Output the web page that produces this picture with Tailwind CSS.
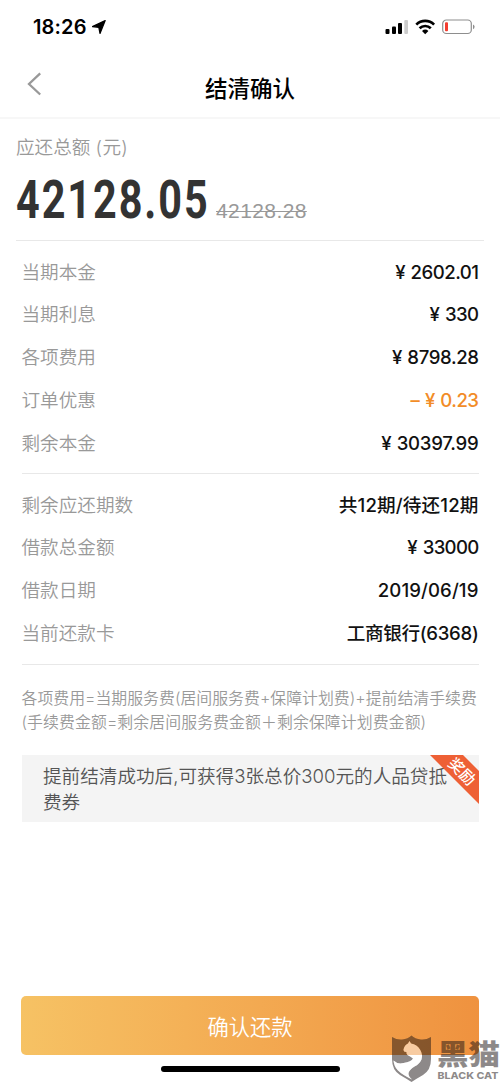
<!DOCTYPE html>
<html lang="zh-CN">
<head>
<meta charset="utf-8">
<title>结清确认</title>
<script src="https://cdn.jsdelivr.net/npm/@tailwindcss/browser@4"></script>
</head>
<body class="bg-white">
<div class="relative flex h-[1082px] w-[500px] flex-col overflow-hidden bg-white font-['Inter','Noto_Sans_CJK_SC',sans-serif] whitespace-nowrap">
  <!-- status bar -->
  <div class="flex h-[54px] shrink-0 items-center justify-between pl-[33px] pr-[25px]">
    <div class="flex items-center gap-[5px]">
      <span class="text-[20px] leading-[54px] font-semibold tracking-[0.15px]">18:26</span>
      <svg class="h-[14px] w-[14px]" viewBox="0 0 14 14"><path d="M13.2.6 8 13.4 6.8 7.3.4 6.6Z" fill="#000" stroke="#000" stroke-width="1.2" stroke-linejoin="round"/></svg>
    </div>
    <svg class="h-[16px] w-[90px]" viewBox="0 0 90 16">
      <rect x="0.5" y="10" width="4" height="5" rx="1"/><rect x="7" y="7.5" width="4" height="7.5" rx="1"/><rect x="13" y="4" width="4" height="11" rx="1"/><rect x="19.3" y="1" width="3.7" height="14" rx="1" fill="#ccc"/>
      <g fill="none" stroke="#000" stroke-width="2.7"><path d="M31.3 5.6a12.6 12.6 0 0 1 17.8 0"/><path d="M34.6 9.3a8 8 0 0 1 11.2 0"/></g>
      <path d="M37 11.9a4.7 4.7 0 0 1 6.4 0L40.2 15.2Z"/>
      <rect x="57.7" y="1" width="28.6" height="13.5" rx="3.6" fill="none" stroke="#8e8e8e" stroke-width="1.2"/><rect x="60" y="3.3" width="3" height="9" rx="1" fill="#f43d30"/><path d="M88 5.4v4.8q1.6-.7 1.6-2.4T88 5.4Z" fill="#8e8e8e"/>
    </svg>
  </div>
  <!-- title bar -->
  <div class="grid h-[65px] shrink-0 grid-cols-[1fr_auto_1fr] items-center border-b-2 border-[#f7f7f7] pl-[27px] pr-[27px]">
    <svg class="mb-[4px] h-[24px] w-[15px]" viewBox="0 0 15 24"><path d="M13.2 1.3 2 12l11.2 10.5" fill="none" stroke="#999" stroke-width="2.3"/></svg>
    <h1 class="pt-[6px] text-[22.5px] leading-[30px] font-medium text-black">结清确认</h1>
    <span></span>
  </div>
  <!-- total -->
  <div class="mx-4 flex h-[122px] shrink-0 flex-col border-b border-[#e8e8e8] pt-[14px]">
    <div class="text-[18.6px] leading-[28px] font-[350] text-[#999]">应还总额 <span class="tracking-[0.3px]">(元)</span></div>
    <div class="flex items-baseline">
      <div class="w-[200px]"><div class="w-max origin-left scale-x-[0.78] font-['Roboto'] text-[53px] leading-[79px] font-bold tracking-[2.5px] text-[#333]">42128.05</div></div>
      <div class="font-['Liberation_Sans'] text-[21px] tracking-[0.4px] text-[#999] line-through decoration-1">42128.28</div>
    </div>
  </div>
  <!-- breakdown -->
  <div class="mx-[21.5px] flex h-[233px] shrink-0 flex-col border-b border-[#e8e8e8] pt-[9.7px] text-[18.6px] leading-[42.7px]">
    <div class="flex justify-between"><span class="font-[350] text-[#999]">当期本金</span><span class="flex font-medium text-[#111]"><span class="mr-[5px]">¥</span><span class="tracking-[-0.5px]">2602.01</span></span></div>
    <div class="flex justify-between"><span class="font-[350] text-[#999]">当期利息</span><span class="flex font-medium text-[#111]"><span class="mr-[5px]">¥</span><span class="tracking-[-0.6px]">330</span></span></div>
    <div class="flex justify-between"><span class="font-[350] text-[#999]">各项费用</span><span class="flex font-medium text-[#111]"><span class="mr-[5px]">¥</span><span class="tracking-[-0.4px]">8798.28</span></span></div>
    <div class="flex justify-between"><span class="font-[350] text-[#999]">订单优惠</span><span class="flex font-medium text-[#f28c28]"><span class="mr-[5px]">–</span><span class="mr-[5px]">¥</span><span class="tracking-[-0.5px]">0.23</span></span></div>
    <div class="flex justify-between"><span class="font-[350] text-[#999]">剩余本金</span><span class="flex font-medium text-[#111]"><span class="mr-[5px]">¥</span><span class="tracking-[-0.25px]">30397.99</span></span></div>
  </div>
  <!-- loan details -->
  <div class="mx-[21.5px] flex h-[191px] shrink-0 flex-col border-b border-[#e8e8e8] pt-[9.7px] text-[18.6px] leading-[42.7px]">
    <div class="flex justify-between"><span class="font-[350] text-[#999]">剩余应还期数</span><span class="font-medium tracking-[0.15px] text-[#111]">共12期/待还12期</span></div>
    <div class="flex justify-between"><span class="font-[350] text-[#999]">借款总金额</span><span class="flex font-medium text-[#111]"><span class="mr-[5px]">¥</span><span class="tracking-[-0.7px]">33000</span></span></div>
    <div class="flex justify-between"><span class="font-[350] text-[#999]">借款日期</span><span class="font-medium tracking-[0.1px] text-[#111]">2019/06/19</span></div>
    <div class="flex justify-between"><span class="font-[350] text-[#999]">当前还款卡</span><span class="font-medium tracking-[-0.3px] text-[#111]">工商银行(6368)</span></div>
  </div>
  <!-- fee note -->
  <div class="mx-[21.5px] h-[90px] shrink-0 pt-[22px] text-[15.9px] leading-[24px] font-[350] text-[#999]">
    <div>各项费用=当期服务费(居间服务费+保障计划费)+提前结清手续费</div>
    <div class="tracking-[0.07px]">(手续费金额=剩余居间服务费金额＋剩余保障计划费金额)</div>
  </div>
  <!-- reward -->
  <div class="relative mx-[22px] h-[67px] w-[457px] shrink-0 bg-[#f4f4f4] pt-[8px] pl-[21px] text-[18.6px] leading-[27px] font-[350] text-[#555]">
    <div>提前结清成功后,可获得3张总价300元的人品贷抵</div>
    <div class="-mt-px">费券</div>
    <svg class="absolute top-0 right-0 h-[49px] w-[49px]" viewBox="0 0 49 49"><path d="M0 0H33L49 16V49Z" fill="#ee6035"/><text x="31.5" y="22" transform="rotate(45 31.5 17)" text-anchor="middle" font-size="15.500" font-weight="500" font-family="Noto Sans CJK SC" fill="#fff">奖励</text></svg>
  </div>
  <div class="flex-1"></div>
  <button class="mx-auto mb-[11px] h-[59px] w-[458px] shrink-0 rounded-[5px] bg-linear-to-r from-[#f6c264] to-[#ef923f] pt-[4px] text-[21.3px] font-[350] text-white">确认还款</button>
  <div class="mx-auto mb-[10px] h-[6px] w-[179px] shrink-0 rounded-full bg-black"></div>
  <!-- watermark -->
  <svg class="absolute right-0 bottom-0 h-[52px] w-[112px]" viewBox="388 1030 112 52">
    <g fill="#1c1414" fill-opacity=".5">
      <path fill-rule="evenodd" d="M392 1037q5 3 10 2.500 6-.5 9.500-4 3.500 3.500 9.500 4 5 .5 10-2.500v22q0 11-8 16-7 4-11.500 7-4.500-3-11.500-7-8-5-8-16Z M409.500 1041l1.500 2.500q6 1 9 6 3 5 1.500 10-2 4.500-7 7-5 3-6 6.500-.5 3 3.500 6.500-10-5-14-9-4-4-4.500-10 4 4 10 2.500 8-1.500 9.500-4.500-2-2-5.500-3.500-1.500-1.500-1-3-3 .2-3-2.500 1-4.500 4.500-6Z"/>
      <path d="M409.500 1041l1.500 2.500q6 1 9 6 3 5 1.500 10-2 4.500-7 7-5 3-6 6.500-.5 3 3.500 6.500-10-5-14-9-4-4-4.500-10 4 4 10 2.500 8-1.500 9.500-4.500-2-2-5.500-3.500-1.500-1.500-1-3-3 .2-3-2.500 1-4.500 4.500-6Z" fill="#fff"/>
      <text x="437" y="1064.500" font-size="28" font-weight="900" font-family="Noto Sans CJK SC" textLength="63" lengthAdjust="spacingAndGlyphs">黑猫</text>
      <text x="437.500" y="1079" font-size="9.500" font-weight="800" font-family="Inter" textLength="61" lengthAdjust="spacingAndGlyphs">BLACK CAT</text>
    </g>
  </svg>
</div>
</body>
</html>
